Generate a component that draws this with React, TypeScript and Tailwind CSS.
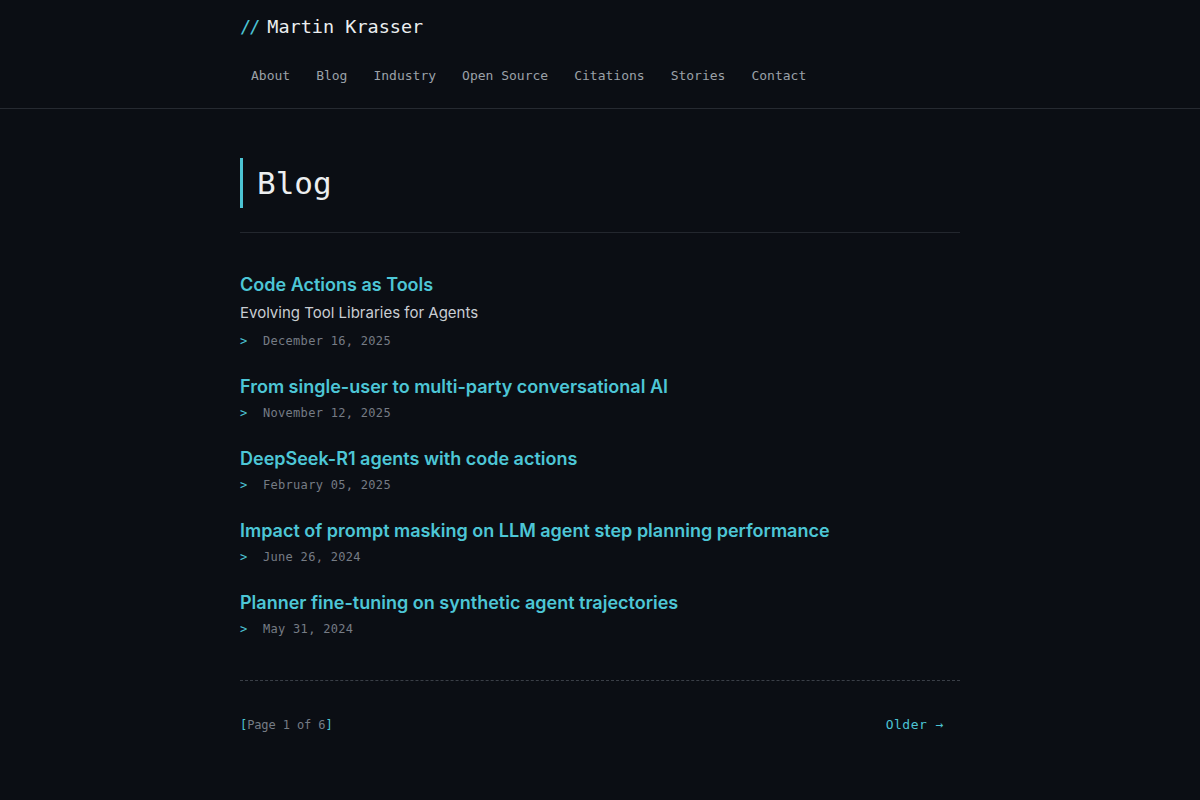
import React from "react";

const mono = { fontFamily: '"DejaVu Sans Mono", "Liberation Mono", monospace' };
const sans = { fontFamily: 'Inter, "Noto Sans", sans-serif' };

const nav = ["About", "Blog", "Industry", "Open Source", "Citations", "Stories", "Contact"];

const posts = [
  { title: "Code Actions as Tools", sub: "Evolving Tool Libraries for Agents", date: "December 16, 2025" },
  { title: "From single-user to multi-party conversational AI", date: "November 12, 2025" },
  { title: "DeepSeek-R1 agents with code actions", date: "February 05, 2025" },
  { title: "Impact of prompt masking on LLM agent step planning performance", date: "June 26, 2024" },
  { title: "Planner fine-tuning on synthetic agent trajectories", date: "May 31, 2024" },
];

export default function App() {
  return (
    <div className="min-h-[800px] w-full bg-[#0b0e14] text-[#e5e7eb]" style={sans}>
      <header className="border-b border-[#262a31]">
        <div className="mx-auto w-[720px] pt-[14px] pb-[22px]">
          <div className="flex items-center text-[18.5px] leading-[26px]" style={mono}>
            <span className="text-[#4cc4d4] tracking-[-2px]">//</span>
            <span className="ml-[9px] text-[#eceef0]">Martin Krasser</span>
          </div>
          <nav className="mt-[26px] flex gap-[4px] text-[13px] leading-[20px] text-[#9ba1a8]" style={mono}>
            {nav.map((n) => (
              <span key={n} className="px-[11px]">{n}</span>
            ))}
          </nav>
        </div>
      </header>
      <main className="mx-auto w-[720px]">
        <h1
          className="mt-[49px] border-l-[3px] border-[#4cc4d4] pl-[14px] text-[31px] leading-[50px] text-[#eceef0]"
          style={mono}
        >
          Blog
        </h1>
        <div className="mt-[24px] h-px bg-[#23272e]" />
        <div className="mt-[39px] flex flex-col gap-[24px]">
          {posts.map((p) => (
            <div key={p.title}>
              <div className="text-[18px] leading-[26px] font-semibold text-[#4dc6d6]">{p.title}</div>
              {p.sub && (
                <div className="mt-[4px] text-[15px] leading-[22px] text-[#c9cdd3]">{p.sub}</div>
              )}
              <div
                className={`${p.sub ? "mt-[8px]" : "mt-[4px]"} flex text-[12px] leading-[18px] tracking-[0.3px]`}
                style={mono}
              >
                <span className="w-[23px] text-[#4cc4d4]">&gt;</span>
                <span className="text-[#767c85]">{p.date}</span>
              </div>
            </div>
          ))}
        </div>
        <div className="mt-[42px] border-t border-dashed border-[#3a3f47]" />
        <div className="mt-[34px] flex items-center justify-between pr-[16px]" style={mono}>
          <div className="text-[12px] leading-[18px] tracking-[-0.1px]">
            <span className="text-[#4cc4d4]">[</span>
            <span className="text-[#767c85]">Page 1 of 6</span>
            <span className="text-[#4cc4d4]">]</span>
          </div>
          <div className="text-[13px] leading-[20px] tracking-[0.5px] text-[#4cc4d4]">Older →</div>
        </div>
      </main>
    </div>
  );
}
